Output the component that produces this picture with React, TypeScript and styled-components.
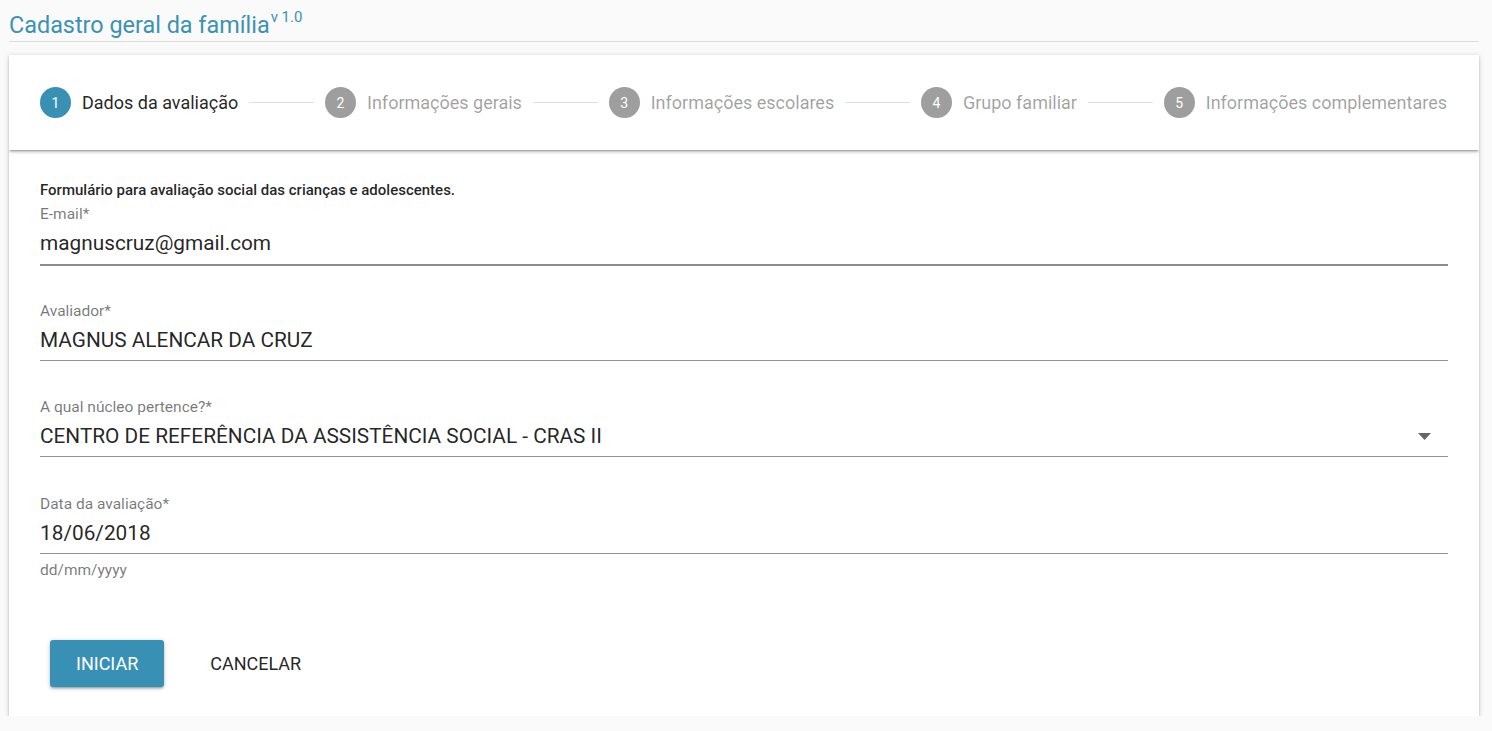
import React from "react";
import styled, { createGlobalStyle } from "styled-components";

const GlobalStyle = createGlobalStyle`
  html, body {
    margin: 0;
    padding: 0;
    background: #fafafa;
    font-family: Roboto, "Liberation Sans", Arial, sans-serif;
    color: rgba(0, 0, 0, 0.87);
  }
  * { box-sizing: border-box; }
`;

const Page = styled.div`
  padding: 0 13px 0 9px;
`;

const TitleBar = styled.h1`
  margin: 0;
  padding-top: 9px;
  height: 42px;
  line-height: 32px;
  font-size: 23.4px;
  font-weight: 400;
  color: #3a92b4;
  border-bottom: 1px solid #dcdcdc;
  white-space: nowrap;
`;

const Version = styled.sup`
  font-size: 15px;
  vertical-align: top;
  position: relative;
  top: -8px;
  margin-left: 1px;
`;

const StepperPaper = styled.div`
  position: relative;
  z-index: 2;
  margin-top: 13px;
  height: 95px;
  background: #fff;
  padding: 0 32px 0 31px;
  display: flex;
  align-items: center;
  box-shadow: 0px 1px 5px 0px rgba(0, 0, 0, 0.2), 0px 2px 2px 0px rgba(0, 0, 0, 0.14),
    0px 3px 1px -2px rgba(0, 0, 0, 0.12);
`;

const Step = styled.div`
  display: flex;
  align-items: center;
  gap: 11px;
  flex: none;
`;

const StepCircle = styled.div<{ $active: boolean }>`
  width: 31px;
  height: 31px;
  border-radius: 50%;
  background: ${(p) => (p.$active ? "#3891b4" : "#9e9e9e")};
  color: #fff;
  font-size: 14px;
  display: flex;
  align-items: center;
  justify-content: center;
`;

const StepLabel = styled.span<{ $active: boolean }>`
  font-size: 18px;
  color: ${(p) => (p.$active ? "rgba(0,0,0,0.87)" : "rgba(0,0,0,0.38)")};
  white-space: nowrap;
`;

const Connector = styled.div`
  flex: 1;
  height: 1px;
  background: #dedede;
  margin: 0 11px;
`;

const FormPaper = styled.div`
  position: relative;
  z-index: 1;
  background: #fff;
  padding: 30px 31px 29px 31px;
  box-shadow: 0px 1px 5px 0px rgba(0, 0, 0, 0.2), 0px 2px 2px 0px rgba(0, 0, 0, 0.14),
    0px 3px 1px -2px rgba(0, 0, 0, 0.12);
`;

const Intro = styled.p`
  margin: 0 0 4px 0;
  font-size: 15px;
  font-weight: 500;
  line-height: 20px;
  color: rgba(0, 0, 0, 0.87);
`;

const Field = styled.div<{ $gap: number }>`
  margin-top: ${(p) => p.$gap}px;
`;

const Label = styled.label`
  display: block;
  font-size: 15.5px;
  line-height: 20px;
  color: rgba(0, 0, 0, 0.54);
`;

const InputRow = styled.div<{ $hover?: boolean }>`
  display: flex;
  align-items: center;
  padding: 7px 0 ${(p) => (p.$hover ? 9 : 8)}px 0;
  border-bottom: ${(p) => (p.$hover ? "2px solid rgba(0,0,0,0.45)" : "1px solid rgba(0,0,0,0.42)")};
`;

const Value = styled.span`
  flex: 1;
  font-size: 20.8px;
  line-height: 24px;
  color: rgba(0, 0, 0, 0.87);
  white-space: nowrap;
`;

const Arrow = styled.svg`
  width: 13px;
  height: 7px;
  margin-right: 17px;
  flex: none;
`;

const Helper = styled.div`
  margin-top: 8px;
  font-size: 15.5px;
  line-height: 16px;
  color: rgba(0, 0, 0, 0.54);
`;

const Actions = styled.div`
  display: flex;
  align-items: center;
  gap: 20px;
  margin-top: 62px;
  padding-left: 10px;
`;

const Button = styled.button<{ $primary?: boolean }>`
  height: 47px;
  padding: 0 26px;
  border: none;
  border-radius: 3px;
  font-family: Roboto, "Liberation Sans", Arial, sans-serif;
  font-size: 18px;
  text-transform: uppercase;
  cursor: pointer;
  background: ${(p) => (p.$primary ? "#3891b4" : "transparent")};
  color: ${(p) => (p.$primary ? "#fff" : "rgba(0,0,0,0.87)")};
  box-shadow: ${(p) =>
    p.$primary
      ? "0px 1px 5px 0px rgba(0,0,0,0.2), 0px 2px 2px 0px rgba(0,0,0,0.14), 0px 3px 1px -2px rgba(0,0,0,0.12)"
      : "none"};
`;

const steps = [
  "Dados da avaliação",
  "Informações gerais",
  "Informações escolares",
  "Grupo familiar",
  "Informações complementares",
];

export default function App() {
  return (
    <>
      <GlobalStyle />
      <Page>
        <TitleBar>
          Cadastro geral da família<Version>v 1.0</Version>
        </TitleBar>
        <StepperPaper>
          {steps.map((s, i) => (
            <React.Fragment key={s}>
              {i > 0 && <Connector />}
              <Step>
                <StepCircle $active={i === 0}>{i + 1}</StepCircle>
                <StepLabel $active={i === 0}>{s}</StepLabel>
              </Step>
            </React.Fragment>
          ))}
        </StepperPaper>
        <FormPaper>
          <Intro>Formulário para avaliação social das crianças e adolescentes.</Intro>
          <Field $gap={0}>
            <Label>E-mail*</Label>
            <InputRow $hover>
              <Value>magnuscruz@gmail.com</Value>
            </InputRow>
          </Field>
          <Field $gap={35}>
            <Label>Avaliador*</Label>
            <InputRow>
              <Value>MAGNUS ALENCAR DA CRUZ</Value>
            </InputRow>
          </Field>
          <Field $gap={36}>
            <Label>A qual núcleo pertence?*</Label>
            <InputRow>
              <Value>CENTRO DE REFERÊNCIA DA ASSISTÊNCIA SOCIAL - CRAS II</Value>
              <Arrow viewBox="0 0 13 7">
                <polygon points="0,0 13,0 6.5,7" fill="rgba(0,0,0,0.6)" />
              </Arrow>
            </InputRow>
          </Field>
          <Field $gap={37}>
            <Label>Data da avaliação*</Label>
            <InputRow>
              <Value>18/06/2018</Value>
            </InputRow>
            <Helper>dd/mm/yyyy</Helper>
          </Field>
          <Actions>
            <Button $primary>Iniciar</Button>
            <Button>Cancelar</Button>
          </Actions>
        </FormPaper>
      </Page>
    </>
  );
}
